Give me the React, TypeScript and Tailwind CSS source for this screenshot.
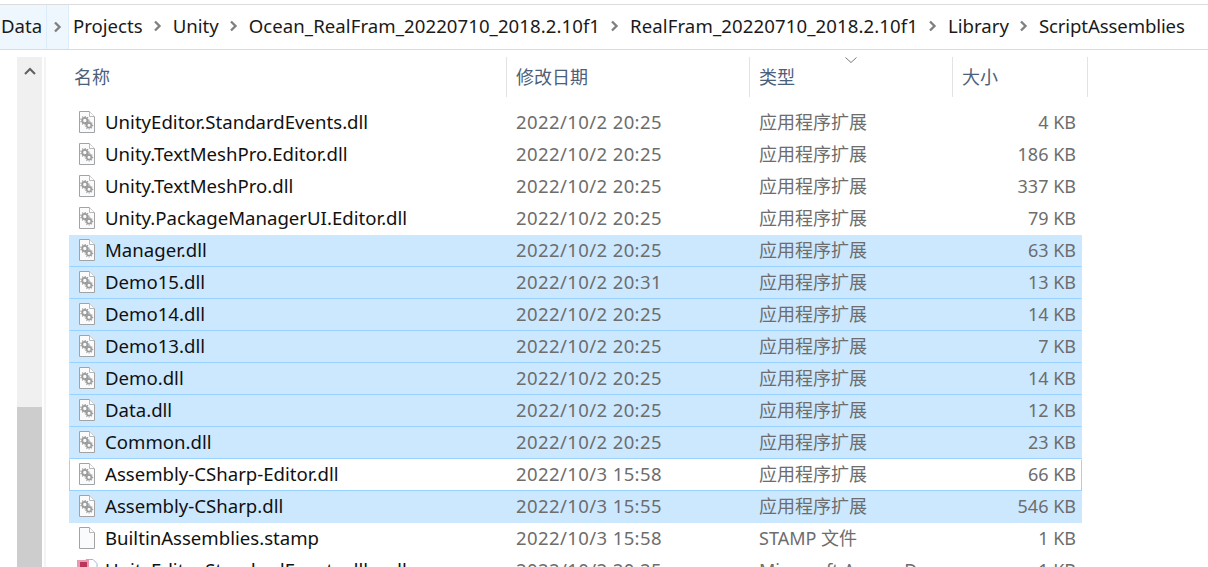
const font = { fontFamily: '"Noto Sans", "Noto Sans CJK SC", sans-serif' };

const crumbs = [
  { c: "Projects", k: "" },
  { c: "Unity", k: "" },
  { c: "Ocean_RealFram_20220710_2018.2.10f1", k: "tracking-[0.06px]" },
  { c: "RealFram_20220710_2018.2.10f1", k: "tracking-[0.1px]" },
  { c: "Library", k: "" },
  { c: "ScriptAssemblies", k: "tracking-[-0.12px]" },
];

type Row = { n: string; d: string; t: string; s: string; sel?: boolean; focus?: boolean; end?: boolean; icon?: "dll" | "blank" | "access" };
const rows: Row[] = [
  { n: "UnityEditor.StandardEvents.dll", d: "2022/10/2 20:25", t: "应用程序扩展", s: "4 KB" },
  { n: "Unity.TextMeshPro.Editor.dll", d: "2022/10/2 20:25", t: "应用程序扩展", s: "186 KB" },
  { n: "Unity.TextMeshPro.dll", d: "2022/10/2 20:25", t: "应用程序扩展", s: "337 KB" },
  { n: "Unity.PackageManagerUI.Editor.dll", d: "2022/10/2 20:25", t: "应用程序扩展", s: "79 KB" },
  { n: "Manager.dll", d: "2022/10/2 20:25", t: "应用程序扩展", s: "63 KB", sel: true },
  { n: "Demo15.dll", d: "2022/10/2 20:31", t: "应用程序扩展", s: "13 KB", sel: true },
  { n: "Demo14.dll", d: "2022/10/2 20:25", t: "应用程序扩展", s: "14 KB", sel: true },
  { n: "Demo13.dll", d: "2022/10/2 20:25", t: "应用程序扩展", s: "7 KB", sel: true },
  { n: "Demo.dll", d: "2022/10/2 20:25", t: "应用程序扩展", s: "14 KB", sel: true },
  { n: "Data.dll", d: "2022/10/2 20:25", t: "应用程序扩展", s: "12 KB", sel: true },
  { n: "Common.dll", d: "2022/10/2 20:25", t: "应用程序扩展", s: "23 KB", sel: true },
  { n: "Assembly-CSharp-Editor.dll", d: "2022/10/3 15:58", t: "应用程序扩展", s: "66 KB", focus: true },
  { n: "Assembly-CSharp.dll", d: "2022/10/3 15:55", t: "应用程序扩展", s: "546 KB", sel: true, end: true },
  { n: "BuiltinAssemblies.stamp", d: "2022/10/3 15:58", t: "STAMP 文件", s: "1 KB", icon: "blank" },
  { n: "UnityEditor.StandardEvents.dll.mdb", d: "2022/10/2 20:25", t: "Microsoft Access D...", s: "1 KB", icon: "access" },
];

function FileIcon({ kind = "dll" }: { kind?: "dll" | "blank" | "access" }) {
  if (kind === "access") {
    return (
      <svg width="22" height="24" viewBox="0 0 22 24" className="shrink-0">
        <path d="M10 1.5h7l4 4v17H10z" fill="#fff" stroke="#a8b4cc" />
        <rect x="1" y="2" width="12" height="12" fill="#e89ab0" />
        <rect x="4" y="4" width="7" height="8" fill="#b8385c" />
      </svg>
    );
  }
  return (
    <svg width="18" height="24" viewBox="0 0 18 24" className="shrink-0">
      <path d="M1.5 1.5h10l5 5v16h-15z" fill="#fafbfc" stroke="#a3a3a3" />
      <path d="M11.5 1.5v5h5" fill="#fff" stroke="#b8b8b8" />
      {kind === "dll" && (
        <g fill="none" stroke="#9c9c9c">
          <circle cx="6.8" cy="10.5" r="2.6" strokeWidth="1.8" />
          <circle cx="11" cy="15.2" r="2.3" strokeWidth="1.6" />
          <circle cx="6.8" cy="10.5" r="4" strokeWidth="1.2" strokeDasharray="1.2 1.4" />
          <circle cx="11" cy="15.2" r="3.6" strokeWidth="1.2" strokeDasharray="1.1 1.3" />
        </g>
      )}
    </svg>
  );
}

function Chevron() {
  return (
    <svg width="10" height="12" viewBox="0 0 10 12" className="shrink-0">
      <path d="M2 1.5l4.5 4.5L2 10.5" fill="none" stroke="#808080" strokeWidth="2.4" />
    </svg>
  );
}

function HeaderCell({ label, className }: { label: string; className: string }) {
  return (
    <div className={`h-10 flex items-center border-r border-[#e3e3e3] text-[#4c607a] text-[18px] ${className}`}>
      {label}
    </div>
  );
}

function rowClass(r: Row) {
  if (r.end) return "bg-[#cce8ff] border-transparent";
  if (r.sel) return "bg-[#cce8ff] border-transparent border-b-[#99d1ff]";
  if (r.focus) return "bg-white border-[#99d1ff] border-t-transparent";
  return "bg-white border-transparent";
}

export default function App() {
  return (
    <div className="w-[1208px] h-[567px] overflow-hidden bg-white flex flex-col" style={font}>
      <div className="mt-1 h-[46px] shrink-0 border-y border-[#dcdcdc] flex items-stretch text-[18.6px] text-[#1a1a1a]">
        <div className="w-[47px] bg-[#eff7fe] border-r border-[#dcecfa] pl-[1px] pb-[2px] flex items-center">Data</div>
        <div className="w-[22px] bg-[#eff7fe] border-r border-[#dcecfa] flex items-center justify-center"><Chevron /></div>
        <div className="flex items-center pl-[4px] pb-[2px] gap-[10px] whitespace-nowrap">
          {crumbs.map((x, i) => (
            <div key={x.c} className="flex items-center gap-[10px]">
              <span className={x.k}>{x.c}</span>
              {i < crumbs.length - 1 && <Chevron />}
            </div>
          ))}
        </div>
      </div>

      <div className="flex-1 min-h-0 flex">
        <div className="ml-[17px] mt-[7px] w-[25px] h-[520px] shrink-0 bg-[#f0f0f0] flex flex-col">
          <div className="h-[350px] pt-[9px] flex justify-center items-start">
            <svg width="14" height="10" viewBox="0 0 14 10"><path d="M2 8l5-5 5 5" fill="none" stroke="#606060" strokeWidth="2" /></svg>
          </div>
          <div className="flex-1 bg-[#cdcdcd]" />
        </div>
        <div className="ml-[2px] w-[2px] h-[520px] mt-[7px] shrink-0 bg-[#f4f4f4]" />

        <div className="relative ml-[23px] w-[1020px] shrink-0 pt-[7px]">
          <svg width="14" height="8" viewBox="0 0 14 8" className="absolute left-[775px] top-[6px]">
            <path d="M1.5 1.5l5.5 5 5.5-5" fill="none" stroke="#7a7a7a" strokeWidth="1" />
          </svg>
          <div className="flex h-10">
            <HeaderCell label="名称" className="w-[438px] pl-[5px]" />
            <HeaderCell label="修改日期" className="w-[243px] pl-[9px]" />
            <HeaderCell label="类型" className="w-[203px] pl-[9px]" />
            <HeaderCell label="大小" className="w-[135px] pl-[9px]" />
          </div>
          <div className="mt-[10px] w-[1013px] text-[18px] leading-none">
            {rows.map((r) => (
              <div key={r.n} className={`h-8 pb-[2px] flex items-center border whitespace-nowrap ${rowClass(r)}`}>
                <div className="w-[436px] flex items-center pl-[8px] text-[#111] text-[18.6px] shrink-0">
                  <div className="w-[18px] flex justify-center"><FileIcon kind={r.icon} /></div>
                  <span className="ml-[9px]">{r.n}</span>
                </div>
                <div className="w-[243px] pl-[10px] text-[#6d6d6d] text-[18.5px] tracking-[0.4px] shrink-0">{r.d}</div>
                <div className="w-[200px] pl-[10px] text-[#6d6d6d] shrink-0">{r.t}</div>
                <div className="w-[127px] text-right text-[#6d6d6d] shrink-0">{r.s}</div>
              </div>
            ))}
          </div>
        </div>
      </div>
    </div>
  );
}
